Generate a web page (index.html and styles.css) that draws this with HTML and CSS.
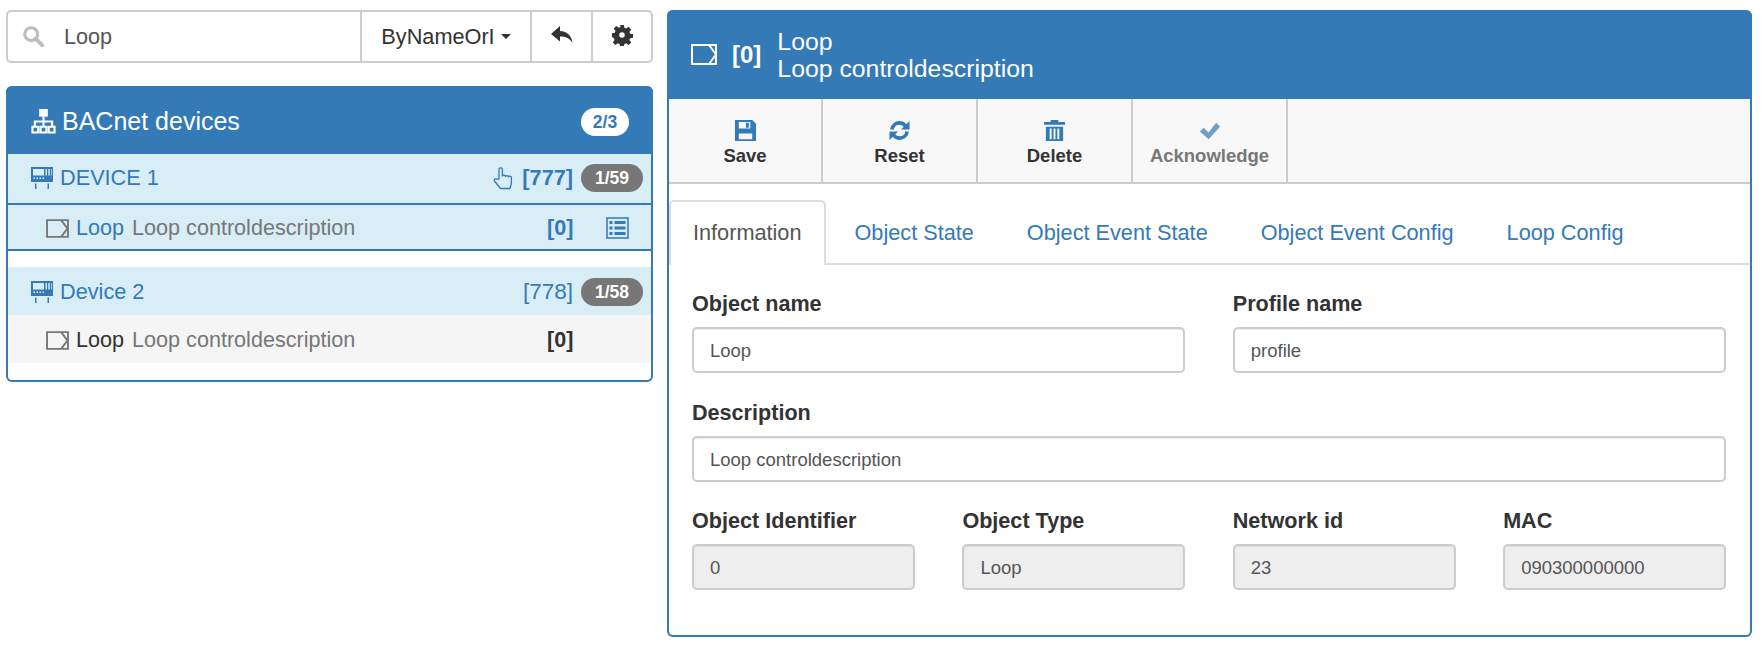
FILE: index.html
```html
<!DOCTYPE html>
<html lang="en">
<head>
<meta charset="utf-8">
<title>BACnet devices</title>
<link rel="stylesheet" href="styles.css">
</head>
<body>
<div class="page">
  <aside class="left">
    <div class="search">
      <div class="search-input">
        <svg class="i-search" viewBox="0 0 24 24"><circle cx="10" cy="10" r="7" fill="none" stroke="currentColor" stroke-width="3.4"/><path d="M15 15l7 7" stroke="currentColor" stroke-width="4.4" stroke-linecap="round"/></svg>
        <span>Loop</span>
      </div>
      <div class="search-btn s-mode"><span>ByNameOrI</span><i class="caret"></i></div>
      <div class="search-btn s-back">
        <svg class="i-18" viewBox="0 0 24 24"><path d="M10 3L1 11l9 7.500v-5c6 0 9.500 1.500 12.500 6.500C22 13 17 8 10 8z" fill="currentColor"/></svg>
      </div>
      <div class="search-btn s-cog">
        <svg class="i-20" viewBox="0 0 24 24"><path fill-rule="evenodd" fill="currentColor" d="M10 1h4l.6 3.200 1.900.8 2.700-1.900 2.800 2.800-1.900 2.700.8 1.900 3.100.5v4l-3.100.6-.8 1.900 1.900 2.700-2.800 2.800-2.700-1.900-1.900.8-.6 3.100h-4l-.6-3.100-1.900-.8-2.700 1.900-2.800-2.800 1.900-2.700-.8-1.900L1 14V10l3.100-.5.800-1.900L3 4.900l2.800-2.800 2.700 1.900 1.900-.8zM12 9a3 3 0 1 0 0 6 3 3 0 0 0 0-6z"/></svg>
      </div>
    </div>

    <section class="tree">
      <header class="tree-head">
        <svg class="i-sitemap" viewBox="0 0 26 26"><path fill="none" stroke="currentColor" stroke-width="2.200" d="M13 8v5M4 18v-5h18v5M13 13v5M1.500 18.500h6v6h-6zM10 18.500h6v6h-6zM18.500 18.500h6v6h-6z"/><rect x="8.500" y="0" width="9" height="8" fill="currentColor"/></svg>
        <span class="tree-title">BACnet devices</span>
        <span class="badge badge-white">2/3</span>
      </header>

      <div class="device-row first">
        <svg class="i-device" viewBox="0 0 24 24"><path fill="currentColor" d="M1 1h22v15H1z"/><path fill="#d9edf7" d="M3 3h11v6.500H3zM15.500 3h1.500v6.500h-1.500zM18.300 3h1.500v6.500h-1.500zM21 3h.7v6.500H21zM3.500 11.500H5V13H3.500zM6.500 11.500H8V13H6.500zM9.500 11.500H11V13H9.500zM12.500 11.500H14V13h-1.500z"/><path fill="currentColor" d="M5 17.500h1.500V23H5zM17.500 17.500H19V23h-1.500z"/></svg>
        <span class="device-name">DEVICE 1</span>
        <svg class="i-hand" viewBox="0 0 20 24"><path fill="none" stroke="currentColor" stroke-width="1.300" stroke-linejoin="round" d="M6 13V3.500a1.700 1.700 0 0 1 3.400 0V10a1.600 1.600 0 0 1 3 .5 1.600 1.600 0 0 1 3 .5 1.600 1.600 0 0 1 3 .8V17c0 2-.8 3-1.500 5.500H7.500L1.500 15c-1-1.500 1-3 2.500-1.800z"/></svg>
        <span class="device-id">[777]</span>
        <span class="badge badge-grey">1/59</span>
      </div>
      <div class="object-row selected">
        <svg class="i-object" viewBox="0 0 22 18"><path fill="none" stroke="currentColor" stroke-width="1.800" d="M1 1h20v16H1zM14.500 1l6 8-6 8"/></svg>
        <span class="object-name">Loop</span>
        <span class="object-desc">Loop controldescription</span>
        <span class="object-id">[0]</span>
        <svg class="i-list" viewBox="0 0 23 22"><path fill="none" stroke="currentColor" stroke-width="1.500" d="M1 1h21v20H1z"/><path fill="currentColor" d="M3.500 4h3v3h-3zM8.500 4h11v3h-11zM3.500 9.500h3v3h-3zM8.500 9.500h11v3h-11zM3.500 15h3v3h-3zM8.500 15h11v3h-11z"/></svg>
      </div>

      <div class="device-row second">
        <svg class="i-device" viewBox="0 0 24 24"><path fill="currentColor" d="M1 1h22v15H1z"/><path fill="#d9edf7" d="M3 3h11v6.500H3zM15.500 3h1.500v6.500h-1.500zM18.300 3h1.500v6.500h-1.500zM21 3h.7v6.500H21zM3.500 11.500H5V13H3.500zM6.500 11.500H8V13H6.500zM9.500 11.500H11V13H9.500zM12.500 11.500H14V13h-1.500z"/><path fill="currentColor" d="M5 17.500h1.500V23H5zM17.500 17.500H19V23h-1.500z"/></svg>
        <span class="device-name">Device 2</span>
        <span class="device-id plain">[778]</span>
        <span class="badge badge-grey">1/58</span>
      </div>
      <div class="object-row muted">
        <svg class="i-object" viewBox="0 0 22 18"><path fill="none" stroke="currentColor" stroke-width="1.800" d="M1 1h20v16H1zM14.500 1l6 8-6 8"/></svg>
        <span class="object-name">Loop</span>
        <span class="object-desc">Loop controldescription</span>
        <span class="object-id">[0]</span>
      </div>
    </section>
  </aside>

  <main class="detail">
    <header class="detail-head">
      <svg class="i-object-lg" viewBox="0 0 26 21"><path fill="none" stroke="currentColor" stroke-width="2" d="M1 1h24v19H1zM18 1l7 9.500-7 9.500"/></svg>
      <strong class="detail-id">[0]</strong>
      <div class="detail-title"><div>Loop</div><div>Loop controldescription</div></div>
    </header>

    <div class="toolbar">
      <button class="tool">
        <svg class="i-tool" viewBox="0 0 24 24"><path fill="currentColor" fill-rule="evenodd" d="M1 1h18l4 4v18H1zM5 3v7h12V3zM5 15v6h14v-6zM12.500 4h3v5h-3z"/></svg>
        <span>Save</span>
      </button>
      <button class="tool">
        <svg class="i-tool" viewBox="0 0 24 24"><path fill="none" stroke="currentColor" stroke-width="3.800" d="M4 11c.6-4 3.800-7 8-7 3 0 5 1.300 6.500 3.500M20 13c-.6 4-3.800 7-8 7-3 0-5-1.300-6.500-3.500"/><path fill="currentColor" d="M22.500 2v9h-9zM1.500 22v-9h9z"/></svg>
        <span>Reset</span>
      </button>
      <button class="tool">
        <svg class="i-tool" viewBox="0 0 24 24"><path fill="currentColor" fill-rule="evenodd" d="M8 1h8v2h7v3H1V3h7zM3 8h18v15H3zM7 10v11h2V10zM11 10v11h2V10zM15 10v11h2V10z"/></svg>
        <span>Delete</span>
      </button>
      <button class="tool off">
        <svg class="i-tool" viewBox="0 0 24 24"><path fill="currentColor" d="M2 13l4-4 5 5L19 4l4 4-12 13z"/></svg>
        <span>Acknowledge</span>
      </button>
    </div>

    <nav class="tabs">
      <a class="tab active">Information</a>
      <a class="tab">Object State</a>
      <a class="tab">Object Event State</a>
      <a class="tab">Object Event Config</a>
      <a class="tab">Loop Config</a>
    </nav>

    <form class="form">
      <div class="group half"><label>Object name</label><div class="control">Loop</div></div>
      <div class="group half"><label>Profile name</label><div class="control">profile</div></div>
      <div class="group full"><label>Description</label><div class="control">Loop controldescription</div></div>
      <div class="group"><label>Object Identifier</label><div class="control ro">0</div></div>
      <div class="group"><label>Object Type</label><div class="control ro">Loop</div></div>
      <div class="group"><label>Network id</label><div class="control ro">23</div></div>
      <div class="group"><label>MAC</label><div class="control ro">090300000000</div></div>
    </form>
  </main>
</div>
</body>
</html>
```
FILE: styles.css
```css
* { box-sizing: border-box; }
html, body { margin: 0; padding: 0; }
body {
  font-family: "Liberation Sans", Arial, sans-serif;
  font-size: 18.500px;
  color: #333;
  background: #fff;
}
.page {
  display: flex;
  align-items: flex-start;
  gap: 14px;
  padding: 10px 12px 8px 6px;
  height: 645px;
}
.left { width: 647px; flex: none; }

.search {
  display: flex;
  height: 53px;
  border: 2px solid #ccc;
  border-radius: 5px;
  background: #fff;
}
.search-input {
  flex: 1;
  display: flex;
  align-items: center;
  padding-left: 14px;
  font-size: 21.600px;
  color: #555;
}
.search-input span { margin-left: 20px; }
.i-search { width: 22px; height: 22px; color: #bdbdbd; margin-bottom: 1px; }
.search-btn {
  display: flex;
  align-items: center;
  justify-content: center;
  height: 100%;
  border-left: 2px solid #ccc;
  color: #333;
  font-size: 21.700px;
}
.s-mode { width: 170px; }
.s-back { width: 61px; }
.s-cog { width: 60px; }
.caret {
  width: 0;
  height: 0;
  margin-left: 6px;
  border: 5.500px solid transparent;
  border-top-color: #333;
  border-bottom: 0;
}
.i-18 { width: 24px; height: 24px; margin-bottom: 3px; }
.i-20 { width: 22px; height: 22px; margin-bottom: 3px; }

.tree {
  margin-top: 23px;
  height: 296px;
  border: 2px solid #337ab7;
  border-top: 0;
  border-radius: 6px;
  background: #fff;
}
.tree-head {
  display: flex;
  align-items: center;
  height: 68px;
  margin: 0 -2px;
  padding: 3px 24px 0 25px;
  border-radius: 6px 6px 0 0;
  background: #337ab7;
  color: #fff;
}
.tree-title { flex: 1; margin-left: 6px; font-size: 25px; }
.i-sitemap { width: 25px; height: 25px; }
.badge {
  display: inline-block;
  border-radius: 14px;
  font-size: 17.500px;
  font-weight: 700;
  text-align: center;
  line-height: 28px;
  height: 28px;
}
.badge-white { width: 48px; background: #fff; color: #337ab7; }
.badge-grey { width: 62px; background: #777; color: #fff; }
.device-row {
  display: flex;
  align-items: center;
  height: 49px;
  padding: 0 8px 2px 22px;
  background: #d9edf7;
  color: #337ab7;
  font-size: 21.700px;
}
.device-row.second { margin-top: 16px; height: 48px; padding-top: 2px; padding-bottom: 0; }
.i-device { width: 24px; height: 24px; flex: none; }
.device-name { flex: 1; margin-left: 6px; }
.i-hand { width: 20px; height: 24px; margin-right: 9px; }
.device-id { font-weight: 700; margin-right: 8px; }
.device-id.plain { font-weight: 400; font-size: 22.500px; }
.object-row {
  display: flex;
  align-items: center;
  height: 48px;
  padding: 2px 22px 0 38px;
  font-size: 21.600px;
}
.object-row.selected {
  background: #d9edf7;
  border-top: 2px solid #337ab7;
  border-bottom: 2px solid #337ab7;
  color: #337ab7;
}
.object-row.muted { background: #f5f5f5; color: #333; }
.i-object { width: 23px; height: 19px; color: #777; flex: none; }
.object-name { margin-left: 7px; }
.object-desc { flex: 1; margin-left: 8px; color: #777; }
.object-id { font-weight: 700; width: 49px; }
.i-list { width: 23px; height: 22px; margin-left: 10px; }
.object-row.muted .object-id { margin-right: 33px; }

.detail {
  flex: 1;
  height: 627px;
  border: 2px solid #337ab7;
  border-top: 0;
  border-radius: 6px;
  background: #fff;
}
.detail-head {
  display: flex;
  align-items: center;
  height: 89px;
  margin: 0 -2px;
  padding: 0 24px;
  border-radius: 6px 6px 0 0;
  background: #337ab7;
  color: #fff;
}
.i-object-lg { width: 26px; height: 21px; flex: none; }
.detail-id { margin-left: 15px; font-size: 24px; }
.detail-title { margin-left: 16px; font-size: 24.800px; line-height: 27px; }

.toolbar {
  display: flex;
  height: 85px;
  background: #f8f8f8;
  border-bottom: 2px solid #ccc;
}
.tool {
  display: flex;
  flex-direction: column;
  align-items: center;
  justify-content: center;
  width: 155px;
  padding: 4px 0 0;
  border: 0;
  border-right: 2px solid #ccc;
  background: transparent;
  font: 700 18.500px "Liberation Sans", Arial, sans-serif;
  color: #333;
}
.tool:first-child { width: 154px; }
.tool.off { color: #777; }
.tool.off .i-tool { opacity: .7; }
.i-tool { width: 23px; height: 23px; color: #337ab7; margin-bottom: 3px; }

.tabs {
  display: flex;
  gap: 5px;
  height: 65px;
  margin-top: 16px;
  border-bottom: 2px solid #ddd;
  font-size: 21.700px;
  color: #337ab7;
}
.tab { height: 65px; padding: 2px 24px 0; line-height: 62px; }
.tab.active {
  padding: 0 22px;
  color: #555;
  background: #fff;
  border: 2px solid #ddd;
  border-bottom: 0;
  border-radius: 5px 5px 0 0;
}

.form {
  display: grid;
  grid-template-columns: repeat(4, 1fr);
  gap: 1.500px 47.500px;
  padding: 1px 24px 0 23px;
}
.group { display: flex; flex-direction: column; }
.half { grid-column: span 2; }
.full { grid-column: span 4; }
label {
  font-size: 21.600px;
  font-weight: 700;
  line-height: 24px;
  margin-top: 26px;
  margin-bottom: 11px;
}
.control {
  height: 46px;
  padding: 0 16px;
  border: 2px solid #ccc;
  border-radius: 5px;
  box-shadow: inset 0 1px 1px rgba(0,0,0,.075);
  background: #fff;
  color: #555;
  line-height: 44px;
  white-space: nowrap;
}
.control.ro { background: #eee; }
```
